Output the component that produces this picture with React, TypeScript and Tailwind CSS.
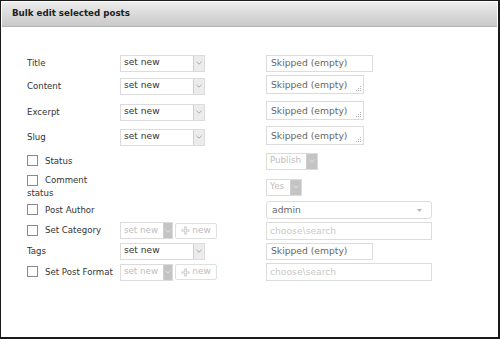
import React from "react";

const font = { fontFamily: '"DejaVu Sans", Verdana, sans-serif' };

function Chevron({ color = "#999" }: { color?: string }) {
  return (
    <svg width="6" height="4" viewBox="0 0 6 4">
      <path d="M0.5 0.8 L3 3.2 L5.5 0.8" fill="none" stroke={color} strokeWidth="0.9" />
    </svg>
  );
}

function Select({ text, w, disabled = false, narrow = false }: { text: string; w: string; disabled?: boolean; narrow?: boolean }) {
  return (
    <div className={`flex h-[17px] ${w} shrink-0 border border-[#dcdcdc] bg-white`}>
      <div
        className={`flex min-w-0 flex-1 items-center overflow-hidden whitespace-nowrap pl-[3px] ${
          disabled ? "text-[8.7px] text-[#bdbdbd]" : "text-[9.1px] text-[#333]"
        }`}
      >
        {text}
      </div>
      <div
        className={`flex ${narrow ? "w-[9px]" : "w-[11px]"} shrink-0 items-center justify-center border-l border-[#cfcfcf] ${
          disabled ? "bg-[#c4c4c4]" : "bg-[#ececec]"
        }`}
      >
        <Chevron color={disabled ? "#e6e6e6" : "#a0a0a0"} />
      </div>
    </div>
  );
}

function NewBtn() {
  return (
    <div className="ml-[2px] flex h-[16px] w-[42px] shrink-0 items-center justify-center gap-[2px] rounded-[2px] border border-[#e0e0e0] bg-white text-[9px] text-[#bdbdbd]">
      <svg width="9" height="9" viewBox="0 0 9 9">
        <path d="M4.5 0.5 L4.5 8.5 M0.5 4.5 L8.5 4.5" stroke="#c4c4c4" strokeWidth="2.2" />
        <path d="M4.5 1.5 L4.5 7.5 M1.5 4.5 L7.5 4.5" stroke="#f0f0f0" strokeWidth="0.8" />
      </svg>
      <span>new</span>
    </div>
  );
}

function TextArea() {
  return (
    <div className="relative mt-[-3px] flex h-[19px] w-[98px] items-center whitespace-nowrap border border-[#dcdcdc] bg-white pl-[4px] text-[9.2px] text-[#666]">
      Skipped (empty)
      <svg className="absolute bottom-[2px] right-[2px]" width="5" height="5" viewBox="0 0 5 5">
        <rect x="4" y="0" width="1" height="1" fill="#b0b0b0" />
        <rect x="2" y="2" width="1" height="1" fill="#b0b0b0" />
        <rect x="4" y="2" width="1" height="1" fill="#b0b0b0" />
        <rect x="0" y="4" width="1" height="1" fill="#b0b0b0" />
        <rect x="2" y="4" width="1" height="1" fill="#b0b0b0" />
        <rect x="4" y="4" width="1" height="1" fill="#b0b0b0" />
      </svg>
    </div>
  );
}

function TextInput() {
  return (
    <div className="flex h-[17px] w-[107px] items-center whitespace-nowrap border border-[#dcdcdc] bg-white pl-[4px] text-[9.2px] text-[#666]">
      Skipped (empty)
    </div>
  );
}

function Search() {
  return (
    <div className="flex h-[18px] w-[166px] items-center border border-[#dcdcdc] bg-white pl-[3px] text-[9.2px] text-[#c8c8c8]">
      choose\search
    </div>
  );
}

function Check({ label }: { label: React.ReactNode }) {
  return (
    <div className="flex items-center whitespace-nowrap">
      <div className="h-[11px] w-[11px] shrink-0 border border-[#8a8a8a] bg-white" />
      <span className="ml-[7px]">{label}</span>
    </div>
  );
}

function Row({ h, label, mid, right }: { h: string; label: React.ReactNode; mid?: React.ReactNode; right?: React.ReactNode }) {
  return (
    <div className={`grid ${h} grid-cols-[93px_146px_1fr] items-center`}>
      <div className="text-[8.6px] text-[#333]">{label}</div>
      <div className="flex items-center">{mid}</div>
      <div className="flex items-center">{right}</div>
    </div>
  );
}

export default function App() {
  return (
    <div style={font} className="h-[339px] w-[500px] bg-white">
      <div className="flex h-full w-full flex-col border-b-2 border-l border-r-2 border-t border-[#1a1a1a] bg-white">
        <div className="mx-[1px] mt-[1px] flex h-[25px] items-center rounded-t-[3px] border-b border-[#b4b4b4] bg-gradient-to-b from-[#ececec] to-[#c9c9c9] pl-[10px] text-[8.7px] font-bold text-[#222]">
          Bulk edit selected posts
        </div>
        <div className="flex flex-col pl-[26px] pt-[25px]">
          <Row h="h-[22px]" label="Title" mid={<Select text="set new" w="w-[85px]" />} right={<TextInput />} />
          <Row h="h-[24px]" label="Content" mid={<Select text="set new" w="w-[85px]" />} right={<TextArea />} />
          <Row h="h-[28px]" label="Excerpt" mid={<Select text="set new" w="w-[85px]" />} right={<TextArea />} />
          <Row h="h-[22px]" label="Slug" mid={<Select text="set new" w="w-[85px]" />} right={<TextArea />} />
          <Row h="h-[26px]" label={<Check label="Status" />} right={<Select text="Publish" w="w-[52px]" disabled />} />
          <Row
            h="h-[25px]"
            label={
              <div className="leading-[13px]">
                <Check label="Comment" />
                <div>status</div>
              </div>
            }
            right={<Select text="Yes" w="w-[36px]" disabled />}
          />
          <Row
            h="h-[22px]"
            label={<Check label="Post Author" />}
            right={
              <div className="flex h-[18px] w-[166px] items-center justify-between rounded-[3px] border border-[#dcdcdc] bg-white pl-[5px] pr-[9px] text-[9.2px] text-[#666]">
                <span>admin</span>
                <svg width="5" height="3" viewBox="0 0 5 3">
                  <path d="M0 0 L5 0 L2.5 3 Z" fill="#b8b8b8" />
                </svg>
              </div>
            }
          />
          <Row
            h="h-[19px]"
            label={<Check label="Set Category" />}
            mid={
              <>
                <Select text="set new" w="w-[53px]" disabled narrow />
                <NewBtn />
              </>
            }
            right={<Search />}
          />
          <Row h="h-[22px]" label="Tags" mid={<Select text="set new" w="w-[85px]" />} right={<TextInput />} />
          <Row
            h="h-[20px]"
            label={<Check label="Set Post Format" />}
            mid={
              <>
                <Select text="set new" w="w-[53px]" disabled narrow />
                <NewBtn />
              </>
            }
            right={<Search />}
          />
        </div>
      </div>
    </div>
  );
}
